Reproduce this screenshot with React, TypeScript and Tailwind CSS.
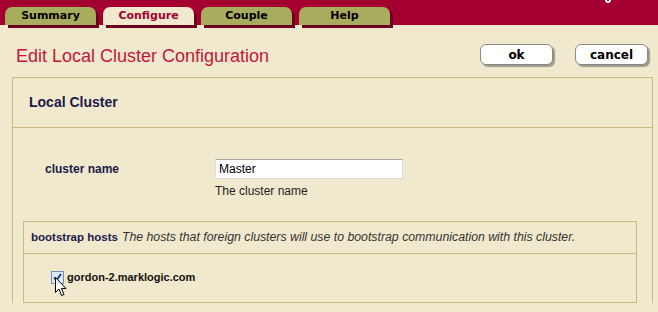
import React from 'react';

const tabs = ['Summary', 'Configure', 'Couple', 'Help'];

const Tab: React.FC<{ label: string; active: boolean }> = ({ label, active }) => (
  <div
    className={`flex h-[18px] w-[91px] items-center justify-center rounded-t-[7px] text-[11px] font-bold font-['DejaVu_Sans',sans-serif] shadow-[3px_3px_0_#6c0021] ${
      active ? 'bg-[#f1e9cd] text-[#a3002f]' : 'bg-[#a8ad5d] text-black'
    }`}
  >
    {label}
  </div>
);

const Btn: React.FC<{ label: string }> = ({ label }) => (
  <button className="h-[21px] w-[73px] rounded-[6px] border border-[#8a8a8a] bg-white text-[12px] font-bold font-['DejaVu_Sans',sans-serif] text-black shadow-[2px_2px_1px_#9a9a8a] leading-none">
    {label}
  </button>
);

const Cursor = () => (
  <svg width="12" height="20" viewBox="0 0 12 20" className="absolute left-[55px] top-[277px]">
    <path d="M0.5 0.5 L0.5 15.5 L4 12 L6.5 18.5 L9 17.5 L6.5 11.5 L11 11.5 Z" fill="#fff" stroke="#000" strokeWidth="1" />
  </svg>
);

export default function App() {
  return (
    <div className="relative h-[312px] w-[658px] overflow-hidden bg-[#f1e9cd] font-['Liberation_Sans',Arial,sans-serif]">
      {/* top bar */}
      <div className="relative flex h-[25px] items-end gap-[7px] bg-[#a3002f] pl-[5px]">
        {tabs.map((t) => (
          <Tab key={t} label={t} active={t === 'Configure'} />
        ))}
        {/* sliver of a cut-off glyph at the top edge */}
        <span className="absolute right-[47px] top-0 h-[3px] w-[6px] rounded-b-[3px] border-2 border-t-0 border-white" />
      </div>

      {/* title row */}
      <div className="mt-[19px] flex h-[21px] items-center justify-between pl-[16px] pr-[10px]">
        <h1 className="pt-[3px] text-[18px] leading-[21px] text-[#c4163a]">Edit Local Cluster Configuration</h1>
        <div className="flex gap-[22px]">
          <Btn label="ok" />
          <Btn label="cancel" />
        </div>
      </div>

      {/* panel */}
      <div className="ml-[12px] mr-[5px] mt-[12px] border border-b-0 border-[#cdb97c]">
        <div className="flex h-[50px] items-center border-b border-[#cdb97c] pl-[16px]">
          <span className="text-[14px] font-bold text-[#1b1a4b]">Local Cluster</span>
        </div>

        <div className="flex pl-[32px] pt-[31px]">
          <div className="w-[170px] pt-[1px] text-[12px] font-bold text-[#1b1a4b]">cluster name</div>
          <div>
            <div className="h-[20px] w-[188px] border border-[#dcdcdc] border-t-[#a8a8a8] bg-white pl-[3px] text-[12px] leading-[18px] text-black">
              Master
            </div>
            <div className="mt-[3px] text-[12px] text-[#222]">The cluster name</div>
          </div>
        </div>

        <div className="ml-[10px] mr-[15px] mt-[21px] border border-[#cdb97c]">
          <div className="flex h-[32px] items-center border-b border-[#cdb97c] pl-[7px] text-[#1b1a4b]">
            <span className="text-[11.5px] font-bold">bootstrap hosts</span>
            <span className="ml-[4px] text-[12.3px] italic text-[#333]">
              The hosts that foreign clusters will use to bootstrap communication with this cluster.
            </span>
          </div>
          <div className="flex h-[48px] items-center pb-[2px] pl-[27px]">
            <span className="flex h-[13px] w-[13px] items-center justify-center border border-[#6e8fbd] bg-[#dde9f7]">
              <svg width="9" height="9" viewBox="0 0 9 9">
                <path d="M1 4.5 L3.5 7 L8 1" fill="none" stroke="#1f3a8a" strokeWidth="2" />
              </svg>
            </span>
            <span className="ml-[3px] text-[11px] font-bold text-[#111]">gordon-2.marklogic.com</span>
          </div>
        </div>
      </div>
      <Cursor />
    </div>
  );
}
